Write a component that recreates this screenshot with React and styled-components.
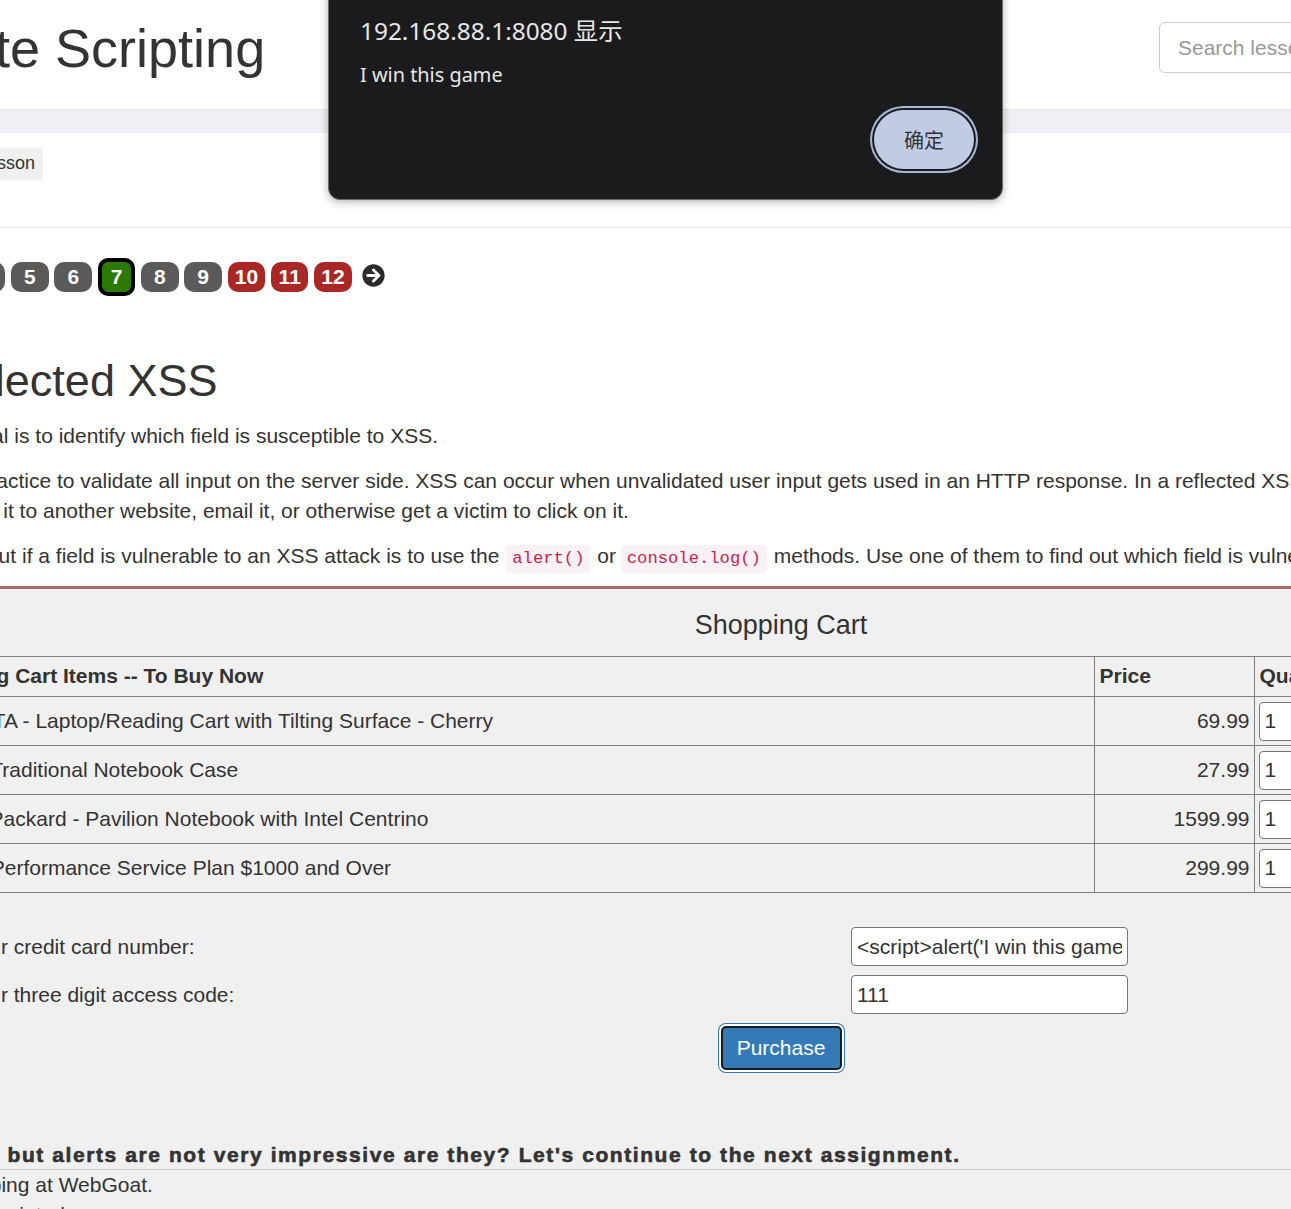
import React from "react";
import styled, { createGlobalStyle } from "styled-components";
import { FaArrowCircleRight } from "react-icons/fa";

const GlobalStyle = createGlobalStyle`
  html, body {
    margin: 0;
    height: 1209px;
    overflow: hidden;
    background: #fff;
  }
  body {
    font-family: "Liberation Sans", Arial, sans-serif;
    font-size: 21px;
    line-height: 30px;
    color: #333;
  }
`;

const Viewport = styled.div`
  position: relative;
  width: 1291px;
  height: 1209px;
  overflow: hidden;
`;

const Page = styled.div`
  width: 1971px;
  margin-left: -209px;
`;

const Header = styled.header`
  display: flex;
  align-items: center;
  justify-content: space-between;
  height: 109px;
  padding-right: 303px;
  border-bottom: 1px solid #e7e7e7;
`;

const Title = styled.h1`
  margin: 0 0 14px;
  font-size: 54px;
  line-height: 60px;
  font-weight: 400;
`;

const Search = styled.input`
  width: 300px;
  height: 51px;
  margin-bottom: 14px;
  box-sizing: border-box;
  padding: 0 18px;
  border: 1px solid #ccc;
  border-radius: 6px;
  font: 21px "Liberation Sans", Arial, sans-serif;
  outline: none;

  &::placeholder {
    color: #999;
  }
`;

const Band = styled.div`
  height: 23px;
  background: #eff0f5;
`;

const Toolbar = styled.div`
  display: flex;
  gap: 11px;
  padding: 15px 0 47px 17px;
  border-bottom: 1px solid #eee;
`;

const ToolButton = styled.button`
  height: 32px;
  padding: 0 8px 2px;
  border: 0;
  border-radius: 4px;
  background: #f0f0f0;
  color: #333;
  font: 18px "Liberation Sans", Arial, sans-serif;
`;

const Pager = styled.nav`
  display: flex;
  align-items: center;
  gap: 5.8px;
  height: 38px;
  margin-top: 30px;
  padding-left: 47px;
`;

const Pill = styled.span`
  display: flex;
  align-items: center;
  justify-content: center;
  box-sizing: border-box;
  width: 37.5px;
  height: ${(p) => (p.$state === "current" ? "38px" : "30px")};
  border: ${(p) => (p.$state === "current" ? "4px solid #000" : "0")};
  border-radius: 10px;
  background: ${(p) =>
    p.$state === "current" ? "#2a7a05" : p.$state === "todo" ? "#a92826" : "#5a5a5a"};
  color: #fff;
  font-size: 21px;
  font-weight: 700;
`;

const NextArrow = styled(FaArrowCircleRight)`
  width: 23px;
  height: 23px;
  margin: -3px 0 0 4px;
  color: #2b2b2b;
`;

const Lesson = styled.section`
  padding-left: 8px;
`;

const Heading = styled.h2`
  margin: 60px 0 0;
  font-size: 45px;
  line-height: 50px;
  font-weight: 400;
  white-space: nowrap;
`;

const Para = styled.p`
  margin: 15px 0 0;
  white-space: nowrap;
`;

const Code = styled.code`
  display: inline-block;
  height: 28px;
  margin: 0 1px 0 ${(p) => (p.$tight ? "-1px" : "1px")};
  padding: 0 6px;
  border-radius: 4px;
  background: #f9f2f4;
  color: #c7254e;
  font: 17.2px/28px "Liberation Mono", monospace;
`;

const Attack = styled.section`
  height: 620px;
  margin: 13px 0 0 9px;
  border-top: 3px solid #b0686c;
  background: #f0f0f0;
`;

const CartTitle = styled.div`
  height: 67px;
  padding-top: 17px;
  box-sizing: border-box;
  text-align: center;
  font-size: 27px;
  line-height: 38px;
`;

const CartTable = styled.table`
  width: 1748px;
  margin: 0 auto;
  border-collapse: collapse;
  table-layout: fixed;
`;

const Th = styled.th`
  height: 37px;
  padding: 0 5px 2px 5px;
  border: 1px solid #808080;
  text-align: left;
  font-weight: 700;
`;

const Td = styled.td`
  height: 48px;
  padding: 0 ${(p) => (p.$right ? "4px" : "5px")} 0 5px;
  border: 1px solid #808080;
  text-align: ${(p) => (p.$right ? "right" : "left")};
`;

const QtyCell = styled.td`
  height: 48px;
  padding: 0 4px;
  border: 1px solid #808080;
`;

const Field = styled.input`
  display: block;
  box-sizing: border-box;
  width: ${(p) => p.$width || "277px"};
  height: 39px;
  padding: 0 5px;
  border: 1px solid #767676;
  border-radius: 4px;
  background: #fff;
  color: #333;
  font: 21px "Liberation Sans", Arial, sans-serif;
  outline: none;
`;

const PayForm = styled.form`
  display: grid;
  grid-template-columns: 940px 1fr;
  row-gap: 9px;
  align-items: center;
  width: 1748px;
  margin: 34px auto 0;
  padding-left: 4px;
  box-sizing: border-box;
`;

const Purchase = styled.button`
  display: block;
  width: 121px;
  height: 44px;
  margin: 12px auto 0;
  padding: 0;
  border: 2px solid #1b1b1d;
  border-radius: 5px;
  box-shadow: 0 0 0 2px #fff, 0 0 0 3px #337ab7;
  background: #337ab7;
  color: #fff;
  font: 21px "Liberation Sans", Arial, sans-serif;
`;

const Feedback = styled.div`
  margin-top: 71px;
  padding-left: 8px;
  border-bottom: 1px solid #ccc;
  font-weight: 700;
  line-height: 28px;
  letter-spacing: 1.58px;
  -webkit-text-stroke: 0.6px #333;
  white-space: nowrap;
`;

const Output = styled.div`
  padding-left: 10px;
  white-space: nowrap;
`;

const Dialog = styled.div`
  position: absolute;
  top: -20px;
  left: 328px;
  box-sizing: border-box;
  width: 675px;
  height: 220px;
  padding: 32px 24px 0 31px;
  border: 1px solid #6a6a6a;
  border-radius: 12px;
  background: #1b1b1d;
  box-shadow: 0 2px 8px rgba(0, 0, 0, 0.3);
  color: #e6e6e6;
  font-family: "Noto Sans", "Noto Sans CJK SC", sans-serif;
`;

const DialogTitle = styled.div`
  font-size: 24.4px;
  line-height: 36px;
`;

const DialogText = styled.div`
  margin-top: 11px;
  font-size: 19.9px;
  line-height: 30px;
`;

const DialogActions = styled.div`
  display: flex;
  justify-content: flex-end;
  margin-top: 16px;
`;

const DialogButton = styled.button`
  box-sizing: border-box;
  width: 100px;
  height: 59px;
  margin: 4px;
  border: 0;
  border-radius: 30px;
  box-shadow: 0 0 0 2px #1b1b1d, 0 0 0 4px #a8b7d6;
  background: #c0cce4;
  color: #333;
  font: 20px "Noto Sans CJK SC", sans-serif;
`;

const items = [
  { name: "Studio RTA - Laptop/Reading Cart with Tilting Surface - Cherry", price: "69.99" },
  { name: "Dynex - Traditional Notebook Case", price: "27.99" },
  { name: "Hewlett-Packard - Pavilion Notebook with Intel Centrino", price: "1599.99" },
  { name: "3 - Year Performance Service Plan $1000 and Over", price: "299.99" },
];

const pillState = (n) => (n === 7 ? "current" : n >= 10 ? "todo" : "done");

export default function App() {
  return (
    <Viewport>
      <GlobalStyle />
      <Page>
        <Header>
          <Title>Cross Site Scripting</Title>
          <Search placeholder="Search lesson" />
        </Header>
        <Band />
        <Toolbar>
          <ToolButton>Show hints</ToolButton>
          <ToolButton>Reset lesson</ToolButton>
        </Toolbar>
        <Pager>
          {[1, 2, 3, 4, 5, 6, 7, 8, 9, 10, 11, 12].map((n) => (
            <Pill key={n} $state={pillState(n)}>
              {n}
            </Pill>
          ))}
          <NextArrow />
        </Pager>
        <Lesson>
          <Heading>Try It! Reflected XSS</Heading>
          <Para>The assignment's goal is to identify which field is susceptible to XSS.</Para>
          <Para>
            It is always a good practice to validate all input on the server side. XSS can occur
            when unvalidated user input gets used in an HTTP response. In a reflected XSS attack,
            an attacker can craft a URL with the
            <br />
            attack script and post it to another website, email it, or otherwise get a victim to
            click on it.
          </Para>
          <Para>
            An easy way to find out if a field is vulnerable to an XSS attack is to use the{" "}
            <Code>alert()</Code> or <Code $tight>console.log()</Code> methods. Use one of them to
            find out which field is vulnerable.
          </Para>
        </Lesson>
        <Attack>
          <CartTitle>Shopping Cart</CartTitle>
          <CartTable>
            <colgroup>
              <col width="1187" />
              <col width="160" />
              <col width="200" />
              <col width="201" />
            </colgroup>
            <thead>
              <tr>
                <Th>Shopping Cart Items -- To Buy Now</Th>
                <Th>Price</Th>
                <Th>Quantity</Th>
                <Th>Total</Th>
              </tr>
            </thead>
            <tbody>
              {items.map((item) => (
                <tr key={item.name}>
                  <Td>{item.name}</Td>
                  <Td $right>{item.price}</Td>
                  <QtyCell>
                    <Field $width="80px" defaultValue="1" />
                  </QtyCell>
                  <Td $right>$0.00</Td>
                </tr>
              ))}
            </tbody>
          </CartTable>
          <PayForm>
            <label>Enter your credit card number:</label>
            <Field defaultValue="<script>alert('I win this game')</script>" />
            <label>Enter your three digit access code:</label>
            <Field defaultValue="111" />
          </PayForm>
          <Purchase type="button">Purchase</Purchase>
          <Feedback>
            Congratulations, but alerts are not very impressive are they? Let's continue to the
            next assignment.
          </Feedback>
          <Output>
            Thank you for shopping at WebGoat.
            <br />
            Your support is appreciated
          </Output>
        </Attack>
      </Page>
      <Dialog>
        <DialogTitle>192.168.88.1:8080 显示</DialogTitle>
        <DialogText>I win this game</DialogText>
        <DialogActions>
          <DialogButton>确定</DialogButton>
        </DialogActions>
      </Dialog>
    </Viewport>
  );
}
